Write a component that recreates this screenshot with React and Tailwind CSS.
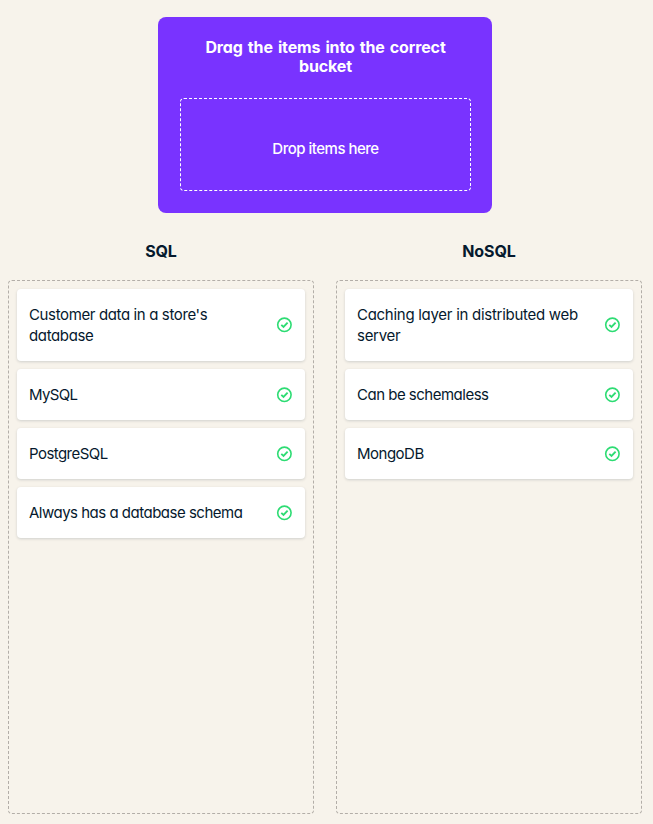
const CheckBadge = () => (
  <svg className="h-4 w-4 shrink-0" viewBox="0 0 16 16" fill="none" stroke="#2ddc73">
    <circle cx="8.4" cy="7.8" r="6.7" strokeWidth="1.6" />
    <path d="M5.3 7.9 7.5 9.9 11.6 5.7" strokeWidth="1.9" />
  </svg>
);

const buckets = [
  {
    title: "SQL",
    titleClass: "tracking-[-0.2px]",
    items: [
      { text: "Customer data in a store's database", className: "tracking-[-0.37px]" },
      { text: "MySQL", className: "tracking-[-0.65px]" },
      { text: "PostgreSQL", className: "tracking-[-0.55px]" },
      { text: "Always has a database schema", className: "tracking-[-0.5px]" },
    ],
  },
  {
    title: "NoSQL",
    titleClass: "tracking-[-0.1px]",
    items: [
      { text: "Caching layer in distributed web server", className: "tracking-[-0.28px]" },
      { text: "Can be schemaless", className: "tracking-[-0.5px]" },
      { text: "MongoDB", className: "tracking-[-0.5px]" },
    ],
  },
];

const Bucket = ({ title, titleClass, items }) => (
  <section className="flex w-[306px] flex-col">
    <h2 className={`mb-[18px] text-center text-[16px] leading-[21px] font-bold ${titleClass}`}>{title}</h2>
    <ul className="flex h-[534px] flex-col gap-2 rounded-[4px] border border-dashed border-[#b3aea8] p-2">
      {items.map(({ text, className }) => (
        <li
          key={text}
          className="flex items-center justify-between rounded-[4px] bg-white py-[15px] pr-[13px] pl-3 shadow-[0_1px_3px_rgba(5,25,45,0.16)]"
        >
          <span className={`w-[232px] text-[15px] leading-[21px] ${className}`}>{text}</span>
          <CheckBadge />
        </li>
      ))}
    </ul>
  </section>
);

export default function App() {
  return (
    <main className="flex h-[824px] w-[653px] flex-col bg-[#f7f3eb] pt-[17px] pl-2 font-['Inter','Liberation_Sans',sans-serif] text-[#05192d] [font-feature-settings:'cv11']">
      <section className="ml-[150px] h-[196px] w-[334px] rounded-[8px] bg-[#7933ff] px-[22px] pt-[21px] pr-[21px] text-center text-white">
        <h1 className="mb-[22px] text-[16px] leading-[19px] font-bold tracking-[-0.15px] [word-spacing:1.5px]">
          Drag the items into the correct
          <br />
          bucket
        </h1>
        <div className="flex h-[93px] items-center justify-center rounded-[4px] border border-dashed border-white pt-[9px] text-[15px] font-medium tracking-[-0.5px]">
          Drop items here
        </div>
      </section>
      <div className="mt-[28px] flex gap-[22px]">
        {buckets.map((b) => (
          <Bucket key={b.title} {...b} />
        ))}
      </div>
    </main>
  );
}
